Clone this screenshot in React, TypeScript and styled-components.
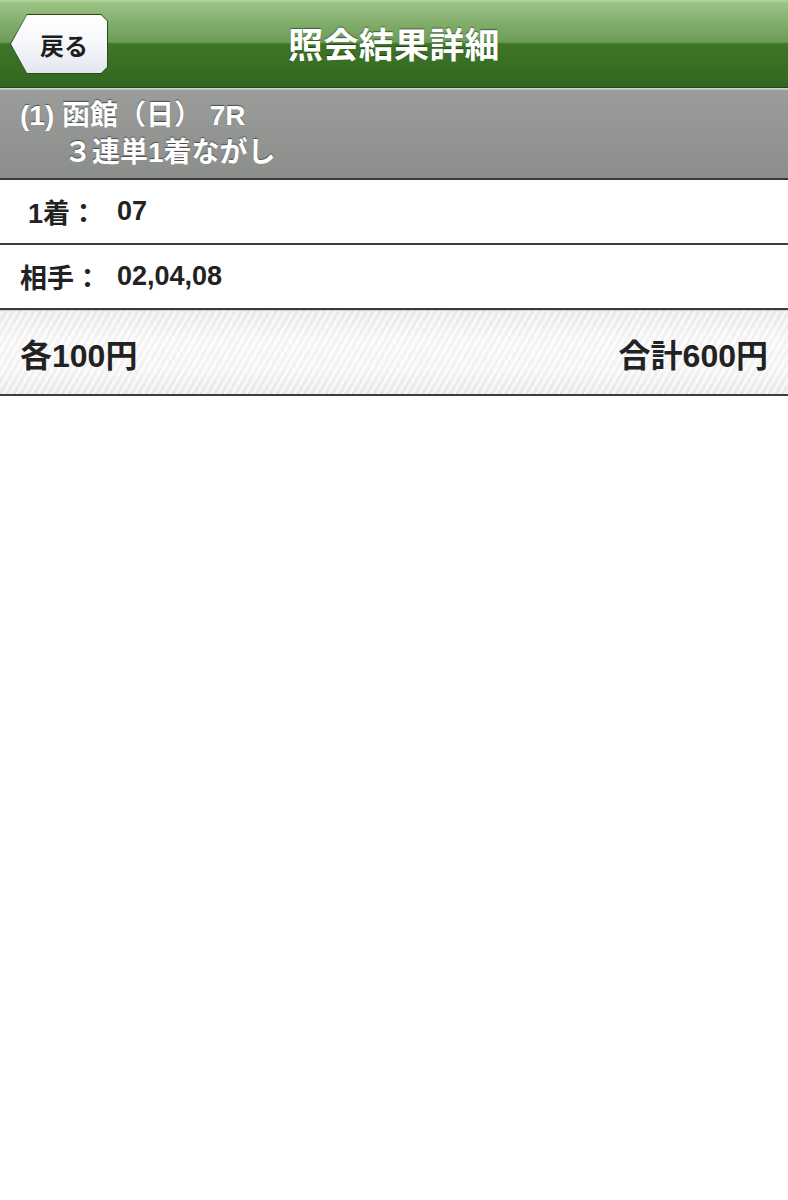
import styled, { createGlobalStyle } from "styled-components";

const GlobalStyle = createGlobalStyle`
  html, body {
    margin: 0;
    padding: 0;
    background: #ffffff;
  }
  body {
    font-family: "Liberation Sans", "Noto Sans CJK JP", sans-serif;
  }
`;

const Page = styled.div`
  width: 788px;
  min-height: 1200px;
  background: #ffffff;
`;

const NavBar = styled.header`
  position: relative;
  height: 87px;
  display: flex;
  align-items: center;
  justify-content: center;
  background: linear-gradient(
    to bottom,
    #b4d7a0 0px,
    #9cc386 3px,
    #85b06e 20px,
    #6d9c58 42px,
    #3e7527 44px,
    #366d22 70px,
    #316620 86px
  );
  border-bottom: 1px solid #25421a;
`;

const NavShine = styled.div`
  height: 2px;
  background: linear-gradient(to bottom, #d8dad8, #b7b9b7);
`;

const BackButton = styled.button`
  position: absolute;
  left: 10px;
  top: 14px;
  width: 98px;
  height: 60px;
  padding: 0;
  border: none;
  background: #2a4a1c;
  clip-path: polygon(17px 0, calc(100% - 7px) 0, 100% 7px, 100% calc(100% - 7px), calc(100% - 7px) 100%, 17px 100%, 0 50%);
  cursor: pointer;
`;

const BackFace = styled.span`
  position: absolute;
  inset: 1px;
  display: flex;
  align-items: center;
  justify-content: center;
  padding-left: 10px;
  background: linear-gradient(to bottom, #ffffff 0%, #f6f7fa 50%, #e2e6ee 100%);
  clip-path: polygon(16px 0, calc(100% - 6px) 0, 100% 6px, 100% calc(100% - 6px), calc(100% - 6px) 100%, 16px 100%, 0 50%);
  font-family: "Noto Sans CJK JP", sans-serif;
  font-weight: 700;
  font-size: 24px;
  color: #1e1e1e;
`;

const Title = styled.h1`
  margin: 0 0 2px;
  font-family: "Noto Sans CJK JP", sans-serif;
  font-weight: 700;
  font-size: 35px;
  color: #ffffff;
  text-shadow: 0 -1px 1px rgba(0, 0, 0, 0.45);
  letter-spacing: 0.3px;
`;

const RaceBox = styled.section`
  height: 90px;
  padding: 7px 20px 0;
  box-sizing: border-box;
  background: linear-gradient(to bottom, #9b9d9b, #8c8e8c);
  border-bottom: 2px solid #3a3a3a;
  color: #ffffff;
  font-weight: 700;
  font-size: 28px;
  line-height: 37px;
  text-shadow: 0 -1px 1px rgba(0, 0, 0, 0.5);
`;

const RaceLine = styled.div<{ $indent?: number }>`
  padding-left: ${(p) => p.$indent ?? 0}px;
  white-space: nowrap;
`;

const Row = styled.div`
  height: 63px;
  display: flex;
  align-items: center;
  padding-left: 20px;
  border-bottom: 2px solid #3c3c3c;
  font-weight: 700;
  font-size: 27px;
  color: #222222;
`;

const Label = styled.span<{ $indent?: number }>`
  width: 97px;
  padding-left: ${(p) => p.$indent ?? 0}px;
  box-sizing: border-box;
  white-space: nowrap;
`;

const Value = styled.span`
  white-space: nowrap;
`;

const TotalBar = styled.div`
  height: 83px;
  display: flex;
  align-items: center;
  justify-content: space-between;
  padding: 0 20px;
  border-top: 1px solid #d0d0d0;
  border-bottom: 2px solid #3c3c3c;
  background:
    repeating-linear-gradient(
      -60deg,
      rgba(255, 255, 255, 0.6) 0px,
      rgba(255, 255, 255, 0.6) 3px,
      rgba(232, 232, 232, 0.25) 3px,
      rgba(232, 232, 232, 0.25) 6px
    ),
    linear-gradient(to bottom, #e8e8e8 0%, #f7f7f7 35%, #f6f6f6 70%, #e6e6e6 100%);
  font-weight: 700;
  font-size: 32px;
  color: #222222;
`;

export default function App() {
  return (
    <Page>
      <GlobalStyle />
      <NavBar>
        <BackButton type="button">
          <BackFace>戻る</BackFace>
        </BackButton>
        <Title>照会結果詳細</Title>
      </NavBar>
      <NavShine />
      <RaceBox>
        <RaceLine>(1) 函館（日） 7R</RaceLine>
        <RaceLine $indent={44}>３連単1着ながし</RaceLine>
      </RaceBox>
      <Row>
        <Label $indent={8}>1着：</Label>
        <Value>07</Value>
      </Row>
      <Row>
        <Label>相手：</Label>
        <Value>02,04,08</Value>
      </Row>
      <TotalBar>
        <span>各100円</span>
        <span>合計600円</span>
      </TotalBar>
    </Page>
  );
}
